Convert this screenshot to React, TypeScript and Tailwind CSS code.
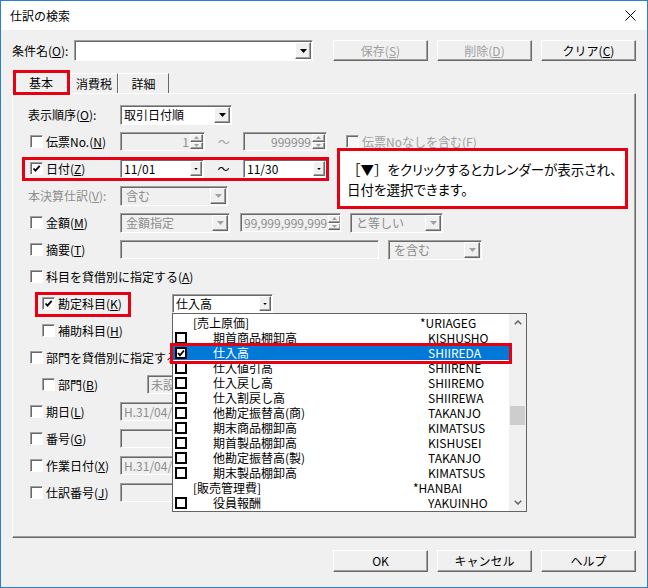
import React from 'react';

const sunken = 'border border-t-[#a0a0a0] border-l-[#a0a0a0] border-b-white border-r-white shadow-[inset_1px_1px_0_#696969]';
const raised = 'border border-t-white border-l-white border-b-[#696969] border-r-[#696969] shadow-[inset_-1px_-1px_0_#a0a0a0]';

const Check: React.FC<{ checked?: boolean; disabled?: boolean }> = ({ checked = false, disabled = false }) => (
    <span className={`relative inline-block w-[13px] h-[13px] shrink-0 ${disabled ? 'bg-[#f7f7f7]' : 'bg-white'} ${sunken}`}>
        {checked && (
            <svg viewBox="0 0 11 11" className="absolute left-0 top-0 w-[11px] h-[11px]">
                <path d="M2.5 5.5 L4.5 7.7 L8.7 2.8" stroke="#000" strokeWidth="1.8" fill="none" />
            </svg>
        )}
    </span>
);

const DropBtn: React.FC<{ disabled?: boolean; small?: boolean }> = ({ disabled = false, small = false }) => (
    <span className={`flex items-center justify-center shrink-0 h-full bg-[#f0f0f0] ${small ? 'w-[12px]' : 'w-[16px]'} ${raised}`}>
        <svg width={small ? 4 : 7} height={small ? 2 : 4} viewBox="0 0 7 4">
            <path d="M0 0h7L3.5 4z" fill={disabled ? '#a0a0a0' : '#000'} />
        </svg>
    </span>
);

const Spin: React.FC = () => (
    <span className="flex flex-col shrink-0 w-[13px] h-full">
        <span className={`flex-1 flex items-center justify-center bg-[#f0f0f0] ${raised}`}>
            <svg width="5" height="3"><path d="M0 3h5L2.5 0z" fill="#a0a0a0" /></svg>
        </span>
        <span className={`flex-1 flex items-center justify-center bg-[#f0f0f0] ${raised}`}>
            <svg width="5" height="3"><path d="M0 0h5L2.5 3z" fill="#a0a0a0" /></svg>
        </span>
    </span>
);

const Btn: React.FC<{ disabled?: boolean; className?: string; children: React.ReactNode }> = ({ disabled = false, className = '', children }) => (
    <div className={`flex items-center justify-center w-[95px] h-[21px] bg-[#f0f0f0] ${raised} ${disabled ? 'text-[#a0a0a0]' : 'text-black'} ${className}`}>
        {children}
    </div>
);

const Row: React.FC<{ className?: string; children: React.ReactNode }> = ({ className = '', children }) => (
    <div className={`flex items-center h-[27px] ${className}`}>{children}</div>
);

const Lbl: React.FC<{ className?: string; checked?: boolean; children: React.ReactNode }> = ({ className = 'w-[90px]', checked = false, children }) => (
    <div className={`flex items-center gap-[3px] shrink-0 ${className}`}>
        <Check checked={checked} />
        <span className="whitespace-nowrap">{children}</span>
    </div>
);

const Field: React.FC<{ className: string; children?: React.ReactNode }> = ({ className, children }) => (
    <div className={`flex items-center h-[19px] bg-[#f0f0f0] text-[#8d8d8d] pl-[3px] overflow-hidden whitespace-nowrap ${sunken} ${className}`}>
        {children}
    </div>
);

const items = [
    { cat: true, name: '[売上原価]', code: '*URIAGEG', nw: 'w-[227px]' },
    { name: '期首商品棚卸高', code: 'KISHUSHO' },
    { name: '仕入高', code: 'SHIIREDA', sel: true },
    { name: '仕入値引高', code: 'SHIIRENE' },
    { name: '仕入戻し高', code: 'SHIIREMO' },
    { name: '仕入割戻し高', code: 'SHIIREWA' },
    { name: '他勘定振替高(商)', code: 'TAKANJO' },
    { name: '期末商品棚卸高', code: 'KIMATSUS' },
    { name: '期首製品棚卸高', code: 'KISHUSEI' },
    { name: '他勘定振替高(製)', code: 'TAKANJO' },
    { name: '期末製品棚卸高', code: 'KIMATSUS' },
    { cat: true, name: '[販売管理費]', code: '*HANBAI', nw: 'w-[220px]' },
    { name: '役員報酬', code: 'YAKUINHO' },
];

const App: React.FC = () => {
    return (
        <div className="relative w-[648px] h-[588px] overflow-hidden border border-[#2b7fd3] bg-[#f0f0f0] text-[12px] leading-none text-black font-['Noto_Sans_CJK_JP',sans-serif] flex flex-col">
            {/* title bar */}
            <div className="h-[29px] shrink-0 bg-white flex items-center justify-between pl-[9px] pr-[11px]">
                <span>仕訳の検索</span>
                <svg width="11" height="11"><path d="M0.5 0.5 L10.5 10.5 M10.5 0.5 L0.5 10.5" stroke="#000" /></svg>
            </div>

            <div className="flex-1 flex flex-col px-[11px] pt-[10px]">
                {/* 条件名 */}
                <div className="flex items-center h-[21px]">
                    <span className="w-[62px]">条件名(<u>O</u>):</span>
                    <div className={`flex items-center w-[239px] h-full bg-white p-[1px] ${sunken}`}>
                        <span className="flex-1" />
                        <DropBtn />
                    </div>
                    <Btn disabled className="ml-[20px]">保存(<u>S</u>)</Btn>
                    <Btn disabled className="ml-[9px]">削除(<u>D</u>)</Btn>
                    <Btn className="ml-[9px]">クリア(<u>C</u>)</Btn>
                </div>

                {/* tabs */}
                <div className="flex items-end h-[22px] mt-[10px]">
                    <div className="flex items-center justify-center ml-[1px] w-[56px] h-[22px] bg-[#f0f0f0] border-t border-l border-r border-t-white border-l-white border-r-[#696969]">基本</div>
                    <div className="flex items-center justify-center ml-[1px] w-[48px] h-[20px] border-t border-l border-r border-t-white border-l-white border-r-[#696969]">消費税</div>
                    <div className="flex items-center justify-center w-[51px] h-[20px] border-t border-l border-r border-t-white border-l-white border-r-[#696969]">詳細</div>
                </div>

                {/* panel */}
                <div className={`h-[445px] pt-[7px] pl-[17px] ${raised}`}>
                    <Row>
                        <span className="w-[90px] -ml-[2px] shrink-0">表示順序(<u>O</u>):</span>
                        <div className={`flex items-center w-[112px] h-[20px] bg-white p-[1px] ml-[2px] ${sunken}`}>
                            <span className="flex-1 pl-[2px]">取引日付順</span>
                            <DropBtn />
                        </div>
                    </Row>
                    <Row>
                        <Lbl>伝票No.(<u>N</u>)</Lbl>
                        <Field className="w-[85px] p-[1px]">
                            <span className="flex-1 text-right pr-[1px]">1</span>
                            <Spin />
                        </Field>
                        <span className="w-[38px] text-center text-[#a0a0a0]">～</span>
                        <Field className="w-[84px] p-[1px]">
                            <span className="flex-1 text-right pr-[1px]">999999</span>
                            <Spin />
                        </Field>
                        <div className="flex items-center gap-[3px] ml-[19px] text-[#a0a0a0]">
                            <Check disabled />
                            <span>伝票Noなしを含む(<u>F</u>)</span>
                        </div>
                    </Row>
                    <Row>
                        <Lbl checked>日付(<u>Z</u>)</Lbl>
                        <div className={`flex items-center w-[84px] h-[19px] bg-white p-[1px] ${sunken}`}>
                            <span className="flex-1 pl-[2px]">11/01</span>
                            <DropBtn small />
                        </div>
                        <span className="w-[39px] text-center">～</span>
                        <div className={`flex items-center w-[84px] h-[19px] bg-white p-[1px] ${sunken}`}>
                            <span className="flex-1 pl-[2px]">11/30</span>
                            <DropBtn small />
                        </div>
                    </Row>
                    <Row>
                        <span className="w-[90px] -ml-[2px] shrink-0 text-[#8d8d8d]">本決算仕訳(<u>V</u>):</span>
                        <Field className="w-[108px] p-[1px] ml-[2px] h-[20px]">
                            <span className="flex-1 pl-[2px]">含む</span>
                            <DropBtn disabled />
                        </Field>
                    </Row>
                    <Row>
                        <Lbl>金額(<u>M</u>)</Lbl>
                        <Field className="w-[110px] p-[1px] h-[20px]">
                            <span className="flex-1 pl-[2px]">金額指定</span>
                            <DropBtn disabled />
                        </Field>
                        <Field className="w-[101px] p-[1px] ml-[10px]">
                            <span className="flex-1 text-right pr-[1px]">99,999,999,999</span>
                            <Spin />
                        </Field>
                        <Field className="w-[93px] p-[1px] ml-[9px] h-[20px]">
                            <span className="flex-1 pl-[2px]">と等しい</span>
                            <DropBtn disabled />
                        </Field>
                    </Row>
                    <Row>
                        <Lbl>摘要(<u>T</u>)</Lbl>
                        <Field className="w-[259px]" />
                        <Field className="w-[94px] p-[1px] ml-[9px] h-[20px]">
                            <span className="flex-1 pl-[2px]">を含む</span>
                            <DropBtn disabled />
                        </Field>
                    </Row>
                    <Row>
                        <Lbl className="">科目を貸借別に指定する(<u>A</u>)</Lbl>
                    </Row>
                    <Row>
                        <Lbl checked className="w-[142px] pl-[12px]">勘定科目(<u>K</u>)</Lbl>
                        <div className={`flex items-center w-[101px] h-[19px] bg-white p-[1px] ${sunken}`}>
                            <span className="flex-1 pl-[2px]">仕入高</span>
                            <DropBtn small />
                        </div>
                    </Row>
                    <Row>
                        <Lbl className="pl-[12px]">補助科目(<u>H</u>)</Lbl>
                    </Row>
                    <Row>
                        <Lbl className="w-[142px] overflow-hidden">部門を貸借別に指定する(<u>E</u>)</Lbl>
                    </Row>
                    <Row>
                        <Lbl className="w-[117px] pl-[12px]">部門(<u>B</u>)</Lbl>
                        <Field className="w-[26px] border-r-0">未設定</Field>
                    </Row>
                    <Row>
                        <Lbl>期日(<u>L</u>)</Lbl>
                        <Field className="w-[53px] border-r-0">H.31/04/01</Field>
                    </Row>
                    <Row>
                        <Lbl>番号(<u>G</u>)</Lbl>
                        <Field className="w-[53px] border-r-0" />
                    </Row>
                    <Row>
                        <Lbl>作業日付(<u>X</u>)</Lbl>
                        <Field className="w-[53px] border-r-0">H.31/04/01</Field>
                    </Row>
                    <Row>
                        <Lbl>仕訳番号(<u>J</u>)</Lbl>
                        <Field className="w-[53px] border-r-0" />
                    </Row>
                </div>

                {/* bottom buttons */}
                <div className="flex justify-end gap-[9px] mt-[12px]">
                    <Btn className="h-[22px]">OK</Btn>
                    <Btn className="h-[22px]">キャンセル</Btn>
                    <Btn className="h-[22px]">ヘルプ</Btn>
                </div>
            </div>

            {/* callout */}
            <div className="absolute left-[336px] top-[147px] w-[291px] h-[61px] bg-white border-[3px] border-[#e50012] pl-[7px] pt-[9px] text-[13.5px] leading-[20px] whitespace-nowrap [font-feature-settings:'palt']">
                <div className="-mt-[1px]"><span className="[font-feature-settings:normal]">［▼］</span>をクリックするとカレンダーが表示され、</div>
                <div>日付を選択できます。</div>
            </div>

            {/* dropdown list */}
            <div className="absolute left-[171px] top-[312px] w-[355px] h-[199px] bg-white border border-[#646464] flex">
                <div className="flex-1 pt-[1px]">
                    {items.map((it, i) => (
                        <div key={i} className={`flex items-center h-[15px] ${it.sel ? 'bg-[#0078d7] text-white' : ''}`}>
                            {it.cat ? (
                                <span className="w-[20px] shrink-0" />
                            ) : (
                                <span className="w-[40px] shrink-0 pl-[2px]">
                                    <span className="relative block w-[12px] h-[12px] border-2 border-black bg-white">
                                        {it.sel && (
                                            <svg viewBox="0 0 8 8" className="absolute left-0 top-0 w-[8px] h-[8px]">
                                                <path d="M1 4 L3 6.3 L7 1.5" stroke="#000" strokeWidth="1.8" fill="none" />
                                            </svg>
                                        )}
                                    </span>
                                </span>
                            )}
                            <span className={`${it.nw ?? 'w-[215px]'} shrink-0`}>{it.name}</span>
                            <span>{it.code}</span>
                        </div>
                    ))}
                </div>
                <div className="w-[17px] shrink-0 bg-[#f0f0f0] flex flex-col">
                    <div className="h-[17px] flex items-center justify-center">
                        <svg width="8" height="5"><path d="M0.8 4.2 L4 1 L7.2 4.2" stroke="#606060" strokeWidth="1.5" fill="none" /></svg>
                    </div>
                    <div className="flex-1">
                        <div className="mt-[75px] mx-[1px] h-[19px] bg-[#cdcdcd]" />
                    </div>
                    <div className="h-[17px] flex items-center justify-center">
                        <svg width="8" height="5"><path d="M0.8 0.8 L4 4 L7.2 0.8" stroke="#606060" strokeWidth="1.5" fill="none" /></svg>
                    </div>
                </div>
            </div>

            {/* red highlight boxes */}
            <div className="absolute left-[12px] top-[69px] w-[57px] h-[25px] border-[3px] border-[#e50012]" />
            <div className="absolute left-[21px] top-[156px] w-[307px] h-[24px] border-[3px] border-[#e50012]" />
            <div className="absolute left-[34px] top-[291px] w-[96px] h-[25px] border-[3px] border-[#e50012]" />
            <div className="absolute left-[169px] top-[342px] w-[342px] h-[21px] border-[3px] border-[#e50012]" />
        </div>
    );
};

export default App;
